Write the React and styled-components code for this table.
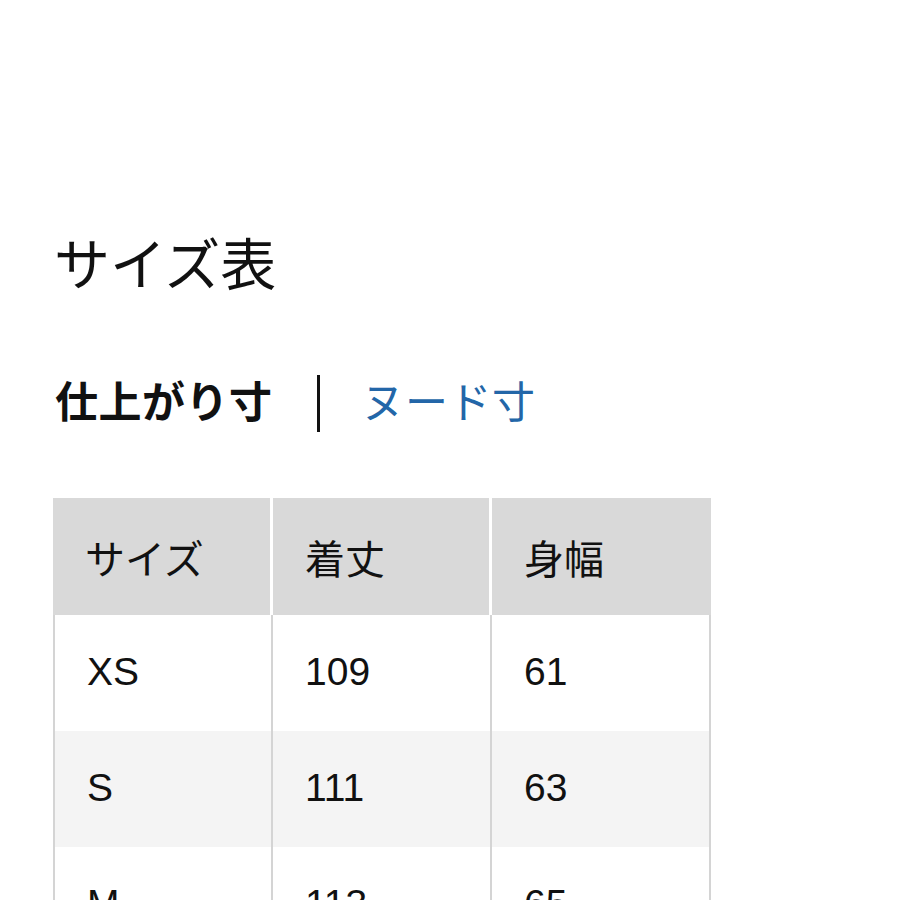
import styled, { createGlobalStyle } from "styled-components";

const rows = [
  { size: "XS", length: "109", width: "61" },
  { size: "S", length: "111", width: "63" },
  { size: "M", length: "113", width: "65" },
  { size: "L", length: "115", width: "67" },
];

export default function App() {
  return (
    <>
      <GlobalStyle />
      <Page>
        <Title>サイズ表</Title>
        <Tabs>
          <Tab $active>仕上がり寸</Tab>
          <Divider />
          <Tab>ヌード寸</Tab>
        </Tabs>
        <Table>
          <HeadCell>サイズ</HeadCell>
          <HeadCell>着丈</HeadCell>
          <HeadCell $last>身幅</HeadCell>
          {rows.map((row, i) => (
            <Row key={row.size} $striped={i % 2 === 1}>
              <Cell $first>{row.size}</Cell>
              <Cell>{row.length}</Cell>
              <Cell>{row.width}</Cell>
            </Row>
          ))}
        </Table>
      </Page>
    </>
  );
}

const GlobalStyle = createGlobalStyle`
  html, body {
    margin: 0;
    background: #fff;
    overflow: hidden;
  }
  body {
    font-family: "Liberation Sans", "Noto Sans CJK JP", sans-serif;
    color: #111;
  }
`;

const Page = styled.div`
  padding: 232px 0 0 53px;
`;

const Title = styled.h1`
  margin: 0 0 0 1px;
  font-size: 56px;
  font-weight: 400;
  line-height: 68px;
`;

const Tabs = styled.div`
  display: flex;
  align-items: center;
  margin-top: 73px;
  height: 60px;
`;

const Tab = styled.span`
  font-size: 43px;
  line-height: 1;
  font-weight: ${(p) => (p.$active ? 600 : 400)};
  color: ${(p) => (p.$active ? "#111" : "#2366a8")};
  padding-left: 2px;
  letter-spacing: 0.5px;
`;

const Divider = styled.span`
  width: 3px;
  height: 57px;
  background: #111;
  margin: 0 40px 0 44px;
`;

const Table = styled.div`
  display: grid;
  grid-template-columns: 220px 219px 219px;
  width: 658px;
  margin-top: 65px;
`;

const HeadCell = styled.div`
  display: flex;
  align-items: center;
  height: 117px;
  padding-left: 32px;
  background: #d9d9d9;
  border-right: ${(p) => (p.$last ? "none" : "3px solid #fff")};
  font-size: 40px;
  box-sizing: border-box;
`;

const Row = styled.div`
  display: contents;
  & > div {
    background: ${(p) => (p.$striped ? "#f4f4f4" : "#fff")};
  }
`;

const Cell = styled.div`
  display: flex;
  align-items: center;
  height: 116px;
  padding-left: 32px;
  padding-bottom: 3px;
  box-sizing: border-box;
  border-right: 2px solid #d4d4d4;
  border-left: ${(p) => (p.$first ? "2px solid #d4d4d4" : "none")};
  font-size: 39px;
`;
